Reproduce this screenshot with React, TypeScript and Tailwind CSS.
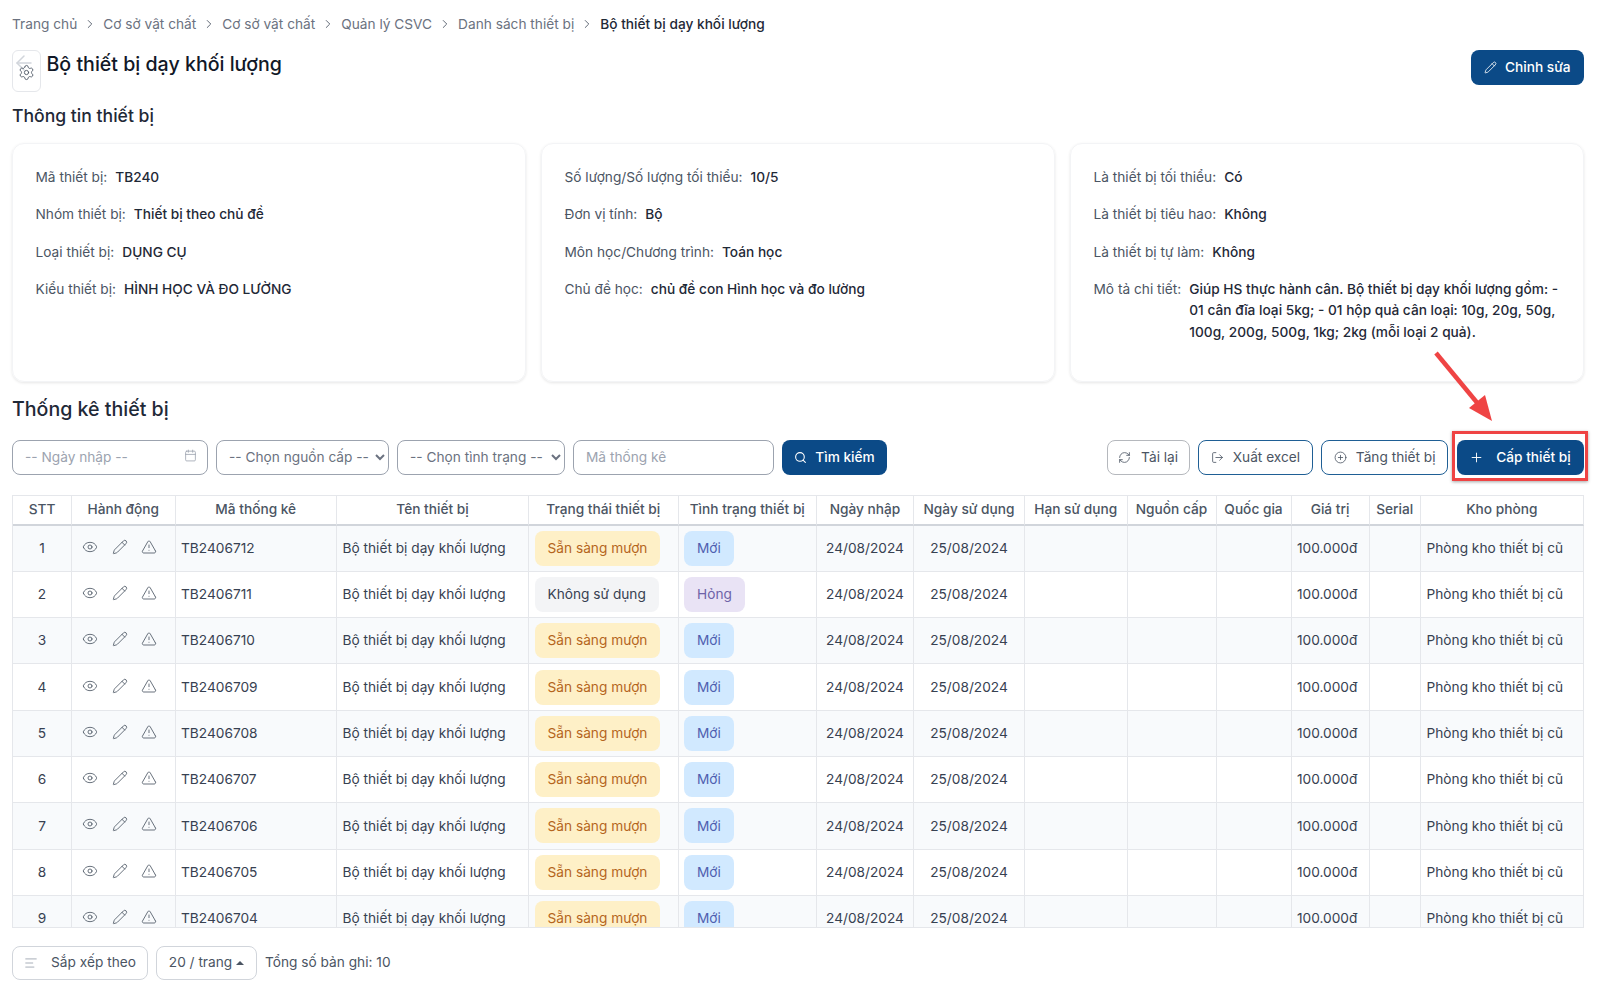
import { ChevronRight, ArrowLeft, Settings, Pencil, RefreshCw, LogOut, CirclePlus, Plus, Search, Eye, TriangleAlert, Calendar, AlignLeft } from "lucide-react";

const crumbs = ["Trang chủ", "Cơ sở vật chất", "Cơ sở vật chất", "Quản lý CSVC", "Danh sách thiết bị"];

const infoCols = [
  [
    ["Mã thiết bị:", "TB240"],
    ["Nhóm thiết bị:", "Thiết bị theo chủ đề"],
    ["Loại thiết bị:", "DỤNG CỤ"],
    ["Kiểu thiết bị:", "HÌNH HỌC VÀ ĐO LƯỜNG"],
  ],
  [
    ["Số lượng/Số lượng tối thiểu:", "10/5"],
    ["Đơn vị tính:", "Bộ"],
    ["Môn học/Chương trình:", "Toán học"],
    ["Chủ đề học:", "chủ đề con Hình học và đo lường"],
  ],
  [
    ["Là thiết bị tối thiểu:", "Có"],
    ["Là thiết bị tiêu hao:", "Không"],
    ["Là thiết bị tự làm:", "Không"],
    ["Mô tả chi tiết:", "Giúp HS thực hành cân. Bộ thiết bị dạy khối lượng gồm: - 01 cân đĩa loại 5kg; - 01 hộp quả cân loại: 10g, 20g, 50g, 100g, 200g, 500g, 1kg; 2kg (mỗi loại 2 quả)."],
  ],
];

const headers = ["STT", "Hành động", "Mã thống kê", "Tên thiết bị", "Trạng thái thiết bị", "Tình trạng thiết bị", "Ngày nhập", "Ngày sử dụng", "Hạn sử dụng", "Nguồn cấp", "Quốc gia", "Giá trị", "Serial", "Kho phòng"];

const rows = [
  { stt: 1, code: "TB2406712" },
  { stt: 2, code: "TB2406711", broken: true },
  { stt: 3, code: "TB2406710" },
  { stt: 4, code: "TB2406709" },
  { stt: 5, code: "TB2406708" },
  { stt: 6, code: "TB2406707" },
  { stt: 7, code: "TB2406706" },
  { stt: 8, code: "TB2406705" },
  { stt: 9, code: "TB2406704" },
];

const cell = "border-r border-b border-[#e5e7eb] px-[5.5px] text-[13.7px] text-[#374151] font-normal";

export default function App() {
  return (
    <div className="relative w-[1600px] h-[992px] overflow-hidden bg-white pl-[12px] pr-[16.5px] pt-[14px] font-['Inter',sans-serif] text-[13.7px] text-[#374151]">
      {/* breadcrumb */}
      <div className="flex items-center h-5 gap-[6px] text-[13.7px] text-[#6b7280]">
        {crumbs.map((c, i) => (
          <div key={i} className="flex items-center gap-[6px]">
            <span>{c}</span>
            <ChevronRight className="w-[14px] h-[14px] text-[#4b5563]" strokeWidth={1.5} />
          </div>
        ))}
        <span className="font-medium text-[#1f2937]">Bộ thiết bị dạy khối lượng</span>
      </div>

      {/* title */}
      <div className="mt-[16px] flex justify-between h-[42px]">
        <div className="flex items-start gap-[6px]">
          <div className="w-[28.5px] h-[42px] border border-[#e5e7eb] rounded-[6px]">
            <ArrowLeft className="w-6 h-6 text-[#d1d5db] -ml-[1px]" strokeWidth={1.5} />
            <Settings className="w-[17px] h-[17px] text-[#4b5563] ml-[5px] -mt-[11px]" strokeWidth={1.25} />
          </div>
          <h1 className="text-[19.6px] leading-[28px] font-medium text-[#111827]">Bộ thiết bị dạy khối lượng</h1>
        </div>
        <button className="h-[35px] w-[112.5px] rounded-[8px] bg-[#0b4a87] text-white flex items-center justify-center gap-[8px] font-medium">
          <Pencil className="w-[13px] h-[13px]" strokeWidth={1.5} />
          Chỉnh sửa
        </button>
      </div>

      <h2 className="mt-[10px] h-[28px] leading-[28px] text-[17.6px] font-medium text-[#1f2937]">Thông tin thiết bị</h2>

      {/* info cards */}
      <div className="mt-[13px] grid grid-cols-3 gap-[15.5px] h-[239px]">
        {infoCols.map((col, i) => (
          <div key={i} className="rounded-[12px] border border-[#f3f4f6] shadow-[0_1px_3px_rgba(0,0,0,0.1)] pt-[22.5px] pl-[22.5px] pr-[22px] flex flex-col gap-[16.1px]">
            {col.map(([label, value]) => (
              <div key={label} className="flex gap-[8px] leading-[21.4px]">
                <span className="text-[#4b5563] whitespace-nowrap">{label}</span>
                <span className="font-medium text-[#1f2937]">{value}</span>
              </div>
            ))}
          </div>
        ))}
      </div>

      <h2 className="mt-[13px] h-[28px] leading-[28px] text-[19.6px] font-medium text-[#1f2937]">Thống kê thiết bị</h2>

      {/* filters */}
      <div className="mt-[16.5px] flex items-center h-[35px]">
        <div className="w-[196px] h-[35px] border border-[#9ca3af] rounded-[8px] flex items-center pl-[12px] pr-[10px] mr-[8px]">
          <input placeholder="-- Ngày nhập --" className="flex-1 min-w-0 outline-none text-[13.7px] placeholder:text-[#9ca3af]" />
          <Calendar className="w-[13px] h-[13px] text-[#9ca3af] -mt-[3px]" strokeWidth={1.5} />
        </div>
        <select className="w-[172.5px] h-[35px] border border-[#9ca3af] rounded-[8px] pl-[8px] text-[13.7px] text-[#6b7280] mr-[8.5px] bg-white">
          <option>-- Chọn nguồn cấp --</option>
        </select>
        <select className="w-[168px] h-[35px] border border-[#9ca3af] rounded-[8px] pl-[8px] text-[13.7px] text-[#6b7280] mr-[8px] bg-white">
          <option>-- Chọn tình trạng --</option>
        </select>
        <input placeholder="Mã thống kê" className="w-[201px] h-[35px] border border-[#9ca3af] rounded-[8px] px-[12px] text-[13.7px] outline-none placeholder:text-[#9ca3af] mr-[8px]" />
        <button className="w-[105px] h-[35px] rounded-[8px] bg-[#0b4a87] text-white flex items-center justify-center gap-[8px] font-medium">
          <Search className="w-[13px] h-[13px]" strokeWidth={2} />
          Tìm kiếm
        </button>
        <div className="ml-auto flex items-center gap-[8.3px]">
          <button className="w-[83px] h-[35px] rounded-[8px] border-[1.5px] border-[#b5b8bd] flex items-center justify-center gap-[10px] text-[#4b5563]">
            <RefreshCw className="w-[13px] h-[13px]" strokeWidth={1.5} />
            Tải lại
          </button>
          <button className="w-[115px] h-[35px] rounded-[8px] border-[1.5px] border-[#1f5f95] flex items-center justify-center gap-[9px] text-[#4b5563]">
            <LogOut className="w-[13px] h-[13px]" strokeWidth={1.5} />
            Xuất excel
          </button>
          <button className="w-[127px] h-[35px] rounded-[8px] border-[1.5px] border-[#1f5f95] flex items-center justify-center gap-[9px] text-[#4b5563]">
            <CirclePlus className="w-[13px] h-[13px]" strokeWidth={1.5} />
            Tăng thiết bị
          </button>
          <button className="w-[127px] h-[35px] rounded-[8px] bg-[#0b4a87] text-white flex items-center justify-center gap-[12px] font-medium">
            <Plus className="w-[15px] h-[15px]" strokeWidth={1.5} />
            Cấp thiết bị
          </button>
        </div>
      </div>

      {/* table */}
      <div className="mt-[20px] h-[433px] overflow-hidden border-t border-l border-b border-[#e5e7eb]">
        <table className="table-fixed w-[1570.5px] border-separate border-spacing-0">
          <colgroup>
            <col className="w-[59px]" />
            <col className="w-[103.5px]" />
            <col className="w-[161.5px]" />
            <col className="w-[192px]" />
            <col className="w-[149.5px]" />
            <col className="w-[138.5px]" />
            <col className="w-[97px]" />
            <col className="w-[111px]" />
            <col className="w-[102.5px]" />
            <col className="w-[89px]" />
            <col className="w-[75px]" />
            <col className="w-[78px]" />
            <col className="w-[51.5px]" />
            <col className="w-[162.5px]" />
          </colgroup>
          <thead>
            <tr className="h-[30px]">
              {headers.map((h) => (
                <th key={h} className="border-r border-b-2 border-r-[#e5e7eb] border-b-[#d1d5db] text-center text-[13.7px] font-medium text-[#4b5563] whitespace-nowrap px-0">
                  {h}
                </th>
              ))}
            </tr>
          </thead>
          <tbody>
            {rows.map((r) => (
              <tr key={r.stt} className={r.stt % 2 === 1 ? "h-[46.3px] bg-[#f8fafc]" : "h-[46.3px] bg-white"}>
                <td className={cell + " text-center"}>{r.stt}</td>
                <td className={cell}>
                  <div className="flex items-center gap-[13.5px] pl-[4.5px] -mt-[3px]">
                    <Eye className="w-[16px] h-[16px] text-[#4b5563]" strokeWidth={1.25} />
                    <Pencil className="w-[16px] h-[16px] text-[#4b5563]" strokeWidth={1.25} />
                    <TriangleAlert className="w-[16px] h-[16px] text-[#4b5563]" strokeWidth={1.25} />
                  </div>
                </td>
                <td className={cell}>{r.code}</td>
                <td className={cell + " whitespace-nowrap"}>Bộ thiết bị dạy khối lượng</td>
                <td className={cell}>
                  <span className={r.broken
                    ? "inline-flex items-center h-[35px] px-[13px] rounded-[8px] bg-[#f3f4f6] text-[#374151] whitespace-nowrap"
                    : "inline-flex items-center h-[35px] px-[13px] rounded-[8px] bg-[#fef0c7] text-[#b5651d] whitespace-nowrap"}>
                    {r.broken ? "Không sử dụng" : "Sẵn sàng mượn"}
                  </span>
                </td>
                <td className={cell}>
                  <span className={r.broken
                    ? "inline-flex items-center h-[35px] px-[13px] rounded-[8px] bg-[#e9e3f5] text-[#6e63a8]"
                    : "inline-flex items-center h-[35px] px-[13px] rounded-[8px] bg-[#d1e9ff] text-[#4f5fb0]"}>
                    {r.broken ? "Hỏng" : "Mới"}
                  </span>
                </td>
                <td className={cell + " text-center"}>24/08/2024</td>
                <td className={cell + " text-center"}>25/08/2024</td>
                <td className={cell}></td>
                <td className={cell}></td>
                <td className={cell}></td>
                <td className={cell}>100.000đ</td>
                <td className={cell}></td>
                <td className={cell + " whitespace-nowrap"}>Phòng kho thiết bị cũ</td>
              </tr>
            ))}
          </tbody>
        </table>
      </div>

      {/* footer */}
      <div className="mt-[18px] flex items-center h-[34px] gap-[8px]">
        <button className="w-[136px] h-[34px] rounded-[8px] border border-[#d1d5db] flex items-center justify-center gap-[13px] text-[#4b5563]">
          <AlignLeft className="w-[14px] h-[14px] text-[#9ca3af]" strokeWidth={1.5} />
          Sắp xếp theo
        </button>
        <button className="w-[101px] h-[34px] rounded-[8px] border border-[#d1d5db] flex items-center justify-center gap-[4px] text-[#4b5563]">
          20 / trang
          <span className="w-0 h-0 border-x-[4px] border-x-transparent border-b-[4px] border-b-[#4b5563]" />
        </button>
        <span className="text-[#4b5563]">Tổng số bản ghi: 10</span>
      </div>

      {/* red annotation over the button */}
      <div className="absolute left-[1451.5px] top-[431px] w-[136px] h-[50px] border-[3px] border-[#ef4444] shadow-[0_1px_3px_rgba(0,0,0,0.35)] pointer-events-none" />
      <svg className="absolute left-[1425px] top-[345px] pointer-events-none" width="80" height="85" viewBox="0 0 80 85">
        <path d="M11 8 L54 60" stroke="#ef4444" strokeWidth="4.5" fill="none" />
        <path d="M67 76 L44 63 L60 50 Z" fill="#ef4444" />
      </svg>
    </div>
  );
}
